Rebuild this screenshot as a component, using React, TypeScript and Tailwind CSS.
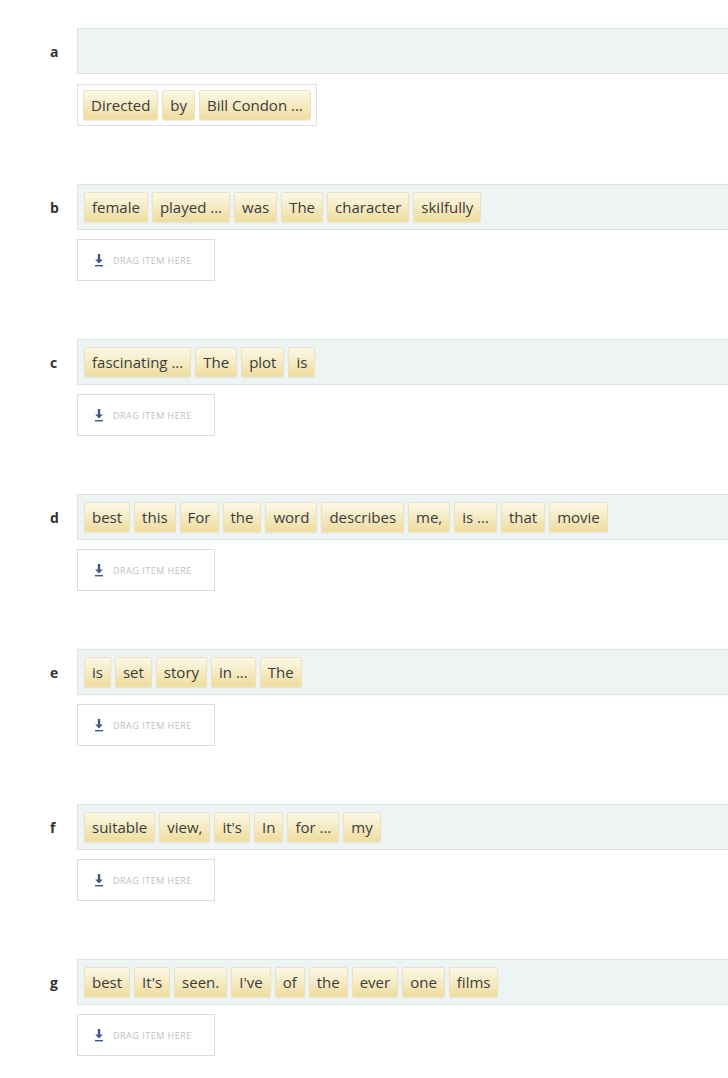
import React from 'react';

// Sentence-ordering exercise: each row has a strip of shuffled words and a drop target
interface Row {
    label: string;
    words: string[];
}

const rows: Row[] = [
    { label: 'b', words: ['female', 'played ...', 'was', 'The', 'character', 'skilfully'] },
    { label: 'c', words: ['fascinating ...', 'The', 'plot', 'is'] },
    {
        label: 'd',
        words: ['best', 'this', 'For', 'the', 'word', 'describes', 'me,', 'is ...', 'that', 'movie'],
    },
    { label: 'e', words: ['is', 'set', 'story', 'in ...', 'The'] },
    { label: 'f', words: ['suitable', 'view,', "it's", 'In', 'for ...', 'my'] },
    { label: 'g', words: ['best', "It's", 'seen.', "I've", 'of', 'the', 'ever', 'one', 'films'] },
];

function Word({ text }: { text: string }) {
    return (
        <div className="h-[30px] px-[7px] flex items-center border border-[#ece2bb] rounded-[2px] bg-gradient-to-b from-[#fcf8e6] to-[#efdd9e] shadow-[0_1px_1px_rgba(0,0,0,0.08)] text-[15px] text-[#3b3b3b] whitespace-nowrap">
            {text}
        </div>
    );
}

function DownloadIcon() {
    return (
        <svg width="10" height="13" viewBox="0 0 10 13" className="shrink-0">
            <path d="M3.8 0h2.4v5.5h2.6L5 9.6 1.2 5.5h2.6z" fill="#3c5a86" />
            <rect x="1" y="11" width="8" height="1.4" fill="#3c5a86" />
        </svg>
    );
}

function DropZone() {
    return (
        <div className="w-[138px] h-[42px] border border-[#d9dddd] bg-white flex items-center pl-[16px] gap-[9px]">
            <DownloadIcon />
            <span className="text-[9px] tracking-[0.5px] text-[#bfbfbf] uppercase leading-none">
                Drag item here
            </span>
        </div>
    );
}

function Strip({ label, words }: { label: string; words: string[] }) {
    return (
        <div className="flex items-center">
            <div className="w-[77px] shrink-0 pl-[50px] text-[14px] font-bold text-[#333]">{label}</div>
            <div className="flex-1 h-[46px] bg-[#eef3f3] border-y border-l border-[#dbe4e4] flex items-center gap-1 pl-[6px]">
                {words.map((w, i) => (
                    <Word key={i} text={w} />
                ))}
            </div>
        </div>
    );
}

export default function App() {
    return (
        <div
            className="min-h-[1078px] w-[728px] bg-white overflow-hidden pt-[28px]"
            style={{ fontFamily: '"Open Sans", "DejaVu Sans", sans-serif' }}
        >
            <div className="flex flex-col">
                <Strip label="a" words={[]} />
                <div className="pl-[77px] mt-[10px]">
                    <div className="inline-flex gap-1 p-[5px] border border-[#e0e0e0] bg-white">
                        {['Directed', 'by', 'Bill Condon ...'].map((w, i) => (
                            <Word key={i} text={w} />
                        ))}
                    </div>
                </div>

                {rows.map((r) => (
                    <div key={r.label} className="mt-[58px]">
                        <Strip label={r.label} words={r.words} />
                        <div className="pl-[77px] mt-[9px]">
                            <DropZone />
                        </div>
                    </div>
                ))}
            </div>
        </div>
    );
}
